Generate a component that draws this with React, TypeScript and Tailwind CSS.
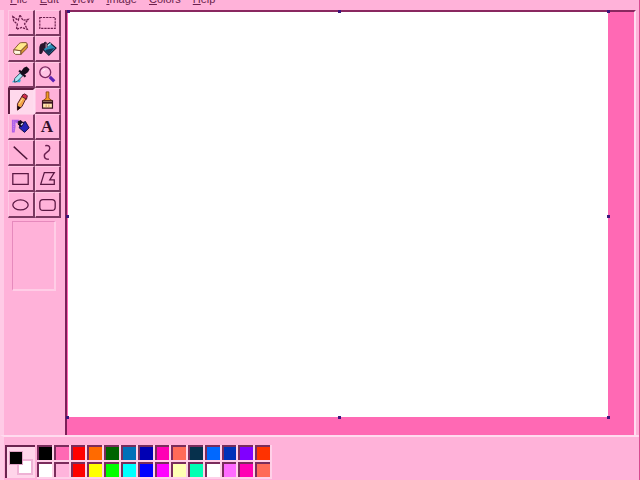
import { useState } from 'react';
import type { ReactNode } from 'react';

const menus = ['File', 'Edit', 'View', 'Image', 'Colors', 'Help'];

const tools: { name: string; art: ReactNode }[] = [
  {
    name: 'Free-form select',
    art: (
      <path
        d="M2 4l6 4 2-6 3 6 6-1-4 5 3 6-6-2-6 2 1-6-4-3z"
        fill="none"
        stroke="#6b1f4c"
        strokeWidth="1.4"
        strokeDasharray="2.5 1"
      />
    ),
  },
  {
    name: 'Select',
    art: <path d="M2 5h17v12H2z" fill="none" stroke="#6b1f4c" strokeWidth="1.3" strokeDasharray="2.5 1" />,
  },
  {
    name: 'Eraser',
    art: (
      <g stroke="#7a4a28" strokeLinejoin="round">
        <path d="M3 12l6-7q1-1 3-1h5l1 2-7 7z" fill="#ffe98a" />
        <path d="M3 12l8 1v4H5q-3-1-2-5z" fill="#fff8e0" />
        <path d="M11 13l7-7v4l-7 7z" fill="#d99632" />
      </g>
    ),
  },
  {
    name: 'Fill',
    art: (
      <g>
        <path d="M7 9l6-5 7 6-8 8-6-6z" fill="#2b8fb8" stroke="#14142c" strokeWidth="1.2" />
        <path d="M9 12l9-2-6 7-4-4z" fill="#17365a" />
        <path d="M10 8l4-3" stroke="#b9f0f7" strokeWidth="1.5" />
        <path d="M10 9V5Q8 2 6 5 2 5 2 9v7q2 1 3-2l1-4z" fill="#29142c" stroke="#29142c" />
        <path d="M9 5v5" stroke="#e8b5d5" />
      </g>
    ),
  },
  {
    name: 'Pick color',
    art: (
      <g>
        <path d="M1 19h9l1-3H4z" fill="#27b2d8" />
        <path d="M4 15l6-6 3 3-6 6-3 1z" fill="#a7e8f4" stroke="#27425c" />
        <path d="M9 6l7 7M12 8l3-4 2-1 2 2-1 2-4 3z" fill="#160b1c" stroke="#160b1c" strokeWidth="2.4" />
      </g>
    ),
  },
  {
    name: 'Magnifier',
    art: (
      <g>
        <circle cx="8" cy="8" r="6" fill="#ffc4e4" stroke="#7a2860" strokeWidth="1.5" />
        <path d="M5 7q1-2 3-2" fill="none" stroke="#fff" />
        <path d="M13 13l5 5" stroke="#5b22b4" strokeWidth="3.5" />
      </g>
    ),
  },
  {
    name: 'Pencil',
    art: (
      <g strokeLinejoin="round">
        <path d="M6 12l6-10 4 3-5 10-5 4z" fill="#f3a548" stroke="#4a1420" />
        <path d="M12 2l2-1 3 2-1 4-5-3z" fill="#d32b4c" stroke="#4a1420" />
        <path d="M6 14v5l4-3z" fill="#18080e" />
        <path d="M8 12l4-6" stroke="#ffe39c" />
      </g>
    ),
  },
  {
    name: 'Brush',
    art: (
      <g>
        <path d="M9 1h3v7l4 3H5l4-3z" fill="#f29a20" stroke="#8c4711" />
        <path d="M5 11h11v8H5z" fill="#ffe7b0" stroke="#38131f" strokeWidth="1.3" />
        <path d="M5 12h11v2H5z" fill="#38131f" />
        <path d="M9 15v3m3-3v3" stroke="#d08a55" />
      </g>
    ),
  },
  {
    name: 'Airbrush',
    art: (
      <g>
        <path d="M1 3h8l-1 3-3 1v4l-1 6H1z" fill="#b05fe8" />
        <path d="M3 4v12m2-10v4" stroke="#d59aef" strokeDasharray="1 1" />
        <path d="M11 7l5-2 4 7-5 5-6-5z" fill="#2522b8" stroke="#100b3c" />
        <path d="M8 5l3-1 3 3-3 4-3-3z" fill="#14091e" stroke="#14091e" />
        <path d="M11 9l2-2" stroke="#d5d9ff" strokeWidth="1.5" />
      </g>
    ),
  },
  {
    name: 'Text',
    art: (
      <text x="10" y="17" textAnchor="middle" fontSize="19" fontWeight="bold" fill="#33102a" className="font-['Liberation_Serif',serif]">
        A
      </text>
    ),
  },
  { name: 'Line', art: <path d="M3 4l15 14" stroke="#4c1638" strokeWidth="1.6" /> },
  {
    name: 'Curve',
    art: <path d="M8 3q5-1 5 3 0 2-3 4t-3 4q0 4 5 4" fill="none" stroke="#6b2050" strokeWidth="1.6" />,
  },
  { name: 'Rectangle', art: <path d="M2 5h17v12H2z" fill="none" stroke="#5b1843" strokeWidth="1.4" /> },
  {
    name: 'Polygon',
    art: <path d="M7 4h11l-5 8h5v5H3z" fill="none" stroke="#5b1843" strokeWidth="1.4" />,
  },
  { name: 'Ellipse', art: <ellipse cx="10.5" cy="11" rx="8.5" ry="5.5" fill="none" stroke="#5b1843" strokeWidth="1.4" /> },
  { name: 'Rounded rectangle', art: <rect x="2" y="5" width="17" height="12" rx="3.5" fill="none" stroke="#5b1843" strokeWidth="1.4" /> },
];

const colors = [
  '#000000', '#ff69b4', '#ff0000', '#ff6a00', '#006400', '#0070b8', '#0000b4',
  '#ff00b4', '#ff6a58', '#06304c', '#0068ff', '#0032b8', '#8000ff', '#ff3200',
  '#ffffff', '#ffb4dc', '#ff0000', '#ffff00', '#00ff00', '#00ffff', '#0000ff',
  '#ff00ff', '#ffffb4', '#00ffb4', '#ffffff', '#ff69ff', '#ff00b4', '#ff6a58',
];

const handles = [
  '-left-px -top-0.5',
  'left-1/2 -top-0.5',
  '-right-0.5 -top-0.5',
  '-left-0.5 top-1/2',
  '-right-0.5 top-1/2',
  '-left-0.5 -bottom-0.5',
  'left-1/2 -bottom-0.5',
  '-right-0.5 -bottom-0.5',
];

export default function App() {
  const [active, setActive] = useState('Pencil');
  const [fore, setFore] = useState('#000000');

  return (
    <div className="flex h-screen flex-col overflow-hidden border-r border-[#d84c91] bg-[#ffb2d9] font-['Liberation_Sans',sans-serif]">
      {/* Menu bar */}
      <nav className="flex h-2.5 shrink-0 items-end gap-3 overflow-hidden pb-[5px] pl-2.5 text-[11px] leading-3 text-[#6b1f4c]">
        {menus.map((menu) => (
          <button key={menu} type="button" className="leading-3">
            <span className="underline">{menu[0]}</span>
            {menu.slice(1)}
          </button>
        ))}
      </nav>

      <div className="flex min-h-0 flex-1 border-l-4 border-[#ffcbe6]">
        {/* Toolbox */}
        <aside className="w-[61px] shrink-0 pl-1">
          <div className="grid w-[53px] grid-cols-2">
            {tools.map((tool) => (
              <button
                key={tool.name}
                type="button"
                aria-label={tool.name}
                aria-pressed={active === tool.name}
                onClick={() => setActive(tool.name)}
                className={
                  active === tool.name
                    ? 'flex h-[26px] items-center justify-center border-t-2 border-r-2 border-l-2 border-t-[#5b1d40] border-r-[#ffdcef] border-l-[#5b1d40] bg-[#ffd9ec]'
                    : 'flex h-[26px] items-center justify-center border-t border-r-2 border-b-2 border-l border-t-[#ffc8e4] border-r-[#7a3860] border-b-[#7a3860] border-l-[#ffc8e4]'
                }
              >
                <svg viewBox="0 0 21 21" className="size-[19px]">{tool.art}</svg>
              </button>
            ))}
          </div>
          <div className="mt-[3px] ml-1 h-[70px] w-11 border-t border-r-2 border-b-2 border-l border-t-[#e68abd] border-r-[#ffcde6] border-b-[#ffcde6] border-l-[#e68abd]" />
        </aside>

        {/* Workspace */}
        <main className="mr-[3px] flex min-w-0 flex-1 border-t-2 border-r-2 border-l-2 border-t-[#8a2860] border-r-[#ffdcef] border-l-[#7c2058] bg-[#ff69b4] pr-[26px] pb-[18px] pl-px">
          <div className="relative flex-1 bg-white">
            {handles.map((place) => (
              <span key={place} className={`absolute size-[3px] bg-[#3b167c] ${place}`} />
            ))}
          </div>
        </main>
      </div>

      {/* Color box */}
      <footer className="flex h-[45px] shrink-0 gap-0.5 border-t-2 border-l-4 border-t-[#ffdcef] border-l-[#ffcbe6] pt-2 pb-0.5 pl-px">
        <div className="relative w-[30px] shrink-0 border-t-2 border-l-2 border-[#6b2450] bg-[#ffd5ea]">
          <span className="absolute top-3 left-2.5 size-4 border-2 border-[#efb2d5] bg-white" />
          <span className="absolute top-1 left-0.5 size-3.5 border border-[#e0a2c5]" style={{ backgroundColor: fore }} />
        </div>
        <div className="grid w-[235px] grid-cols-14 content-start">
          {colors.map((color, i) => (
            <button
              key={i}
              type="button"
              aria-label={`Color ${color}`}
              onClick={() => setFore(color)}
              className="h-[17px] border-r-2 border-b-2 border-[#ffd0e8]"
            >
              <span className="block h-full border-t-2 border-l-2 border-[#7a2c5c]" style={{ backgroundColor: color }} />
            </button>
          ))}
        </div>
      </footer>
    </div>
  );
}
